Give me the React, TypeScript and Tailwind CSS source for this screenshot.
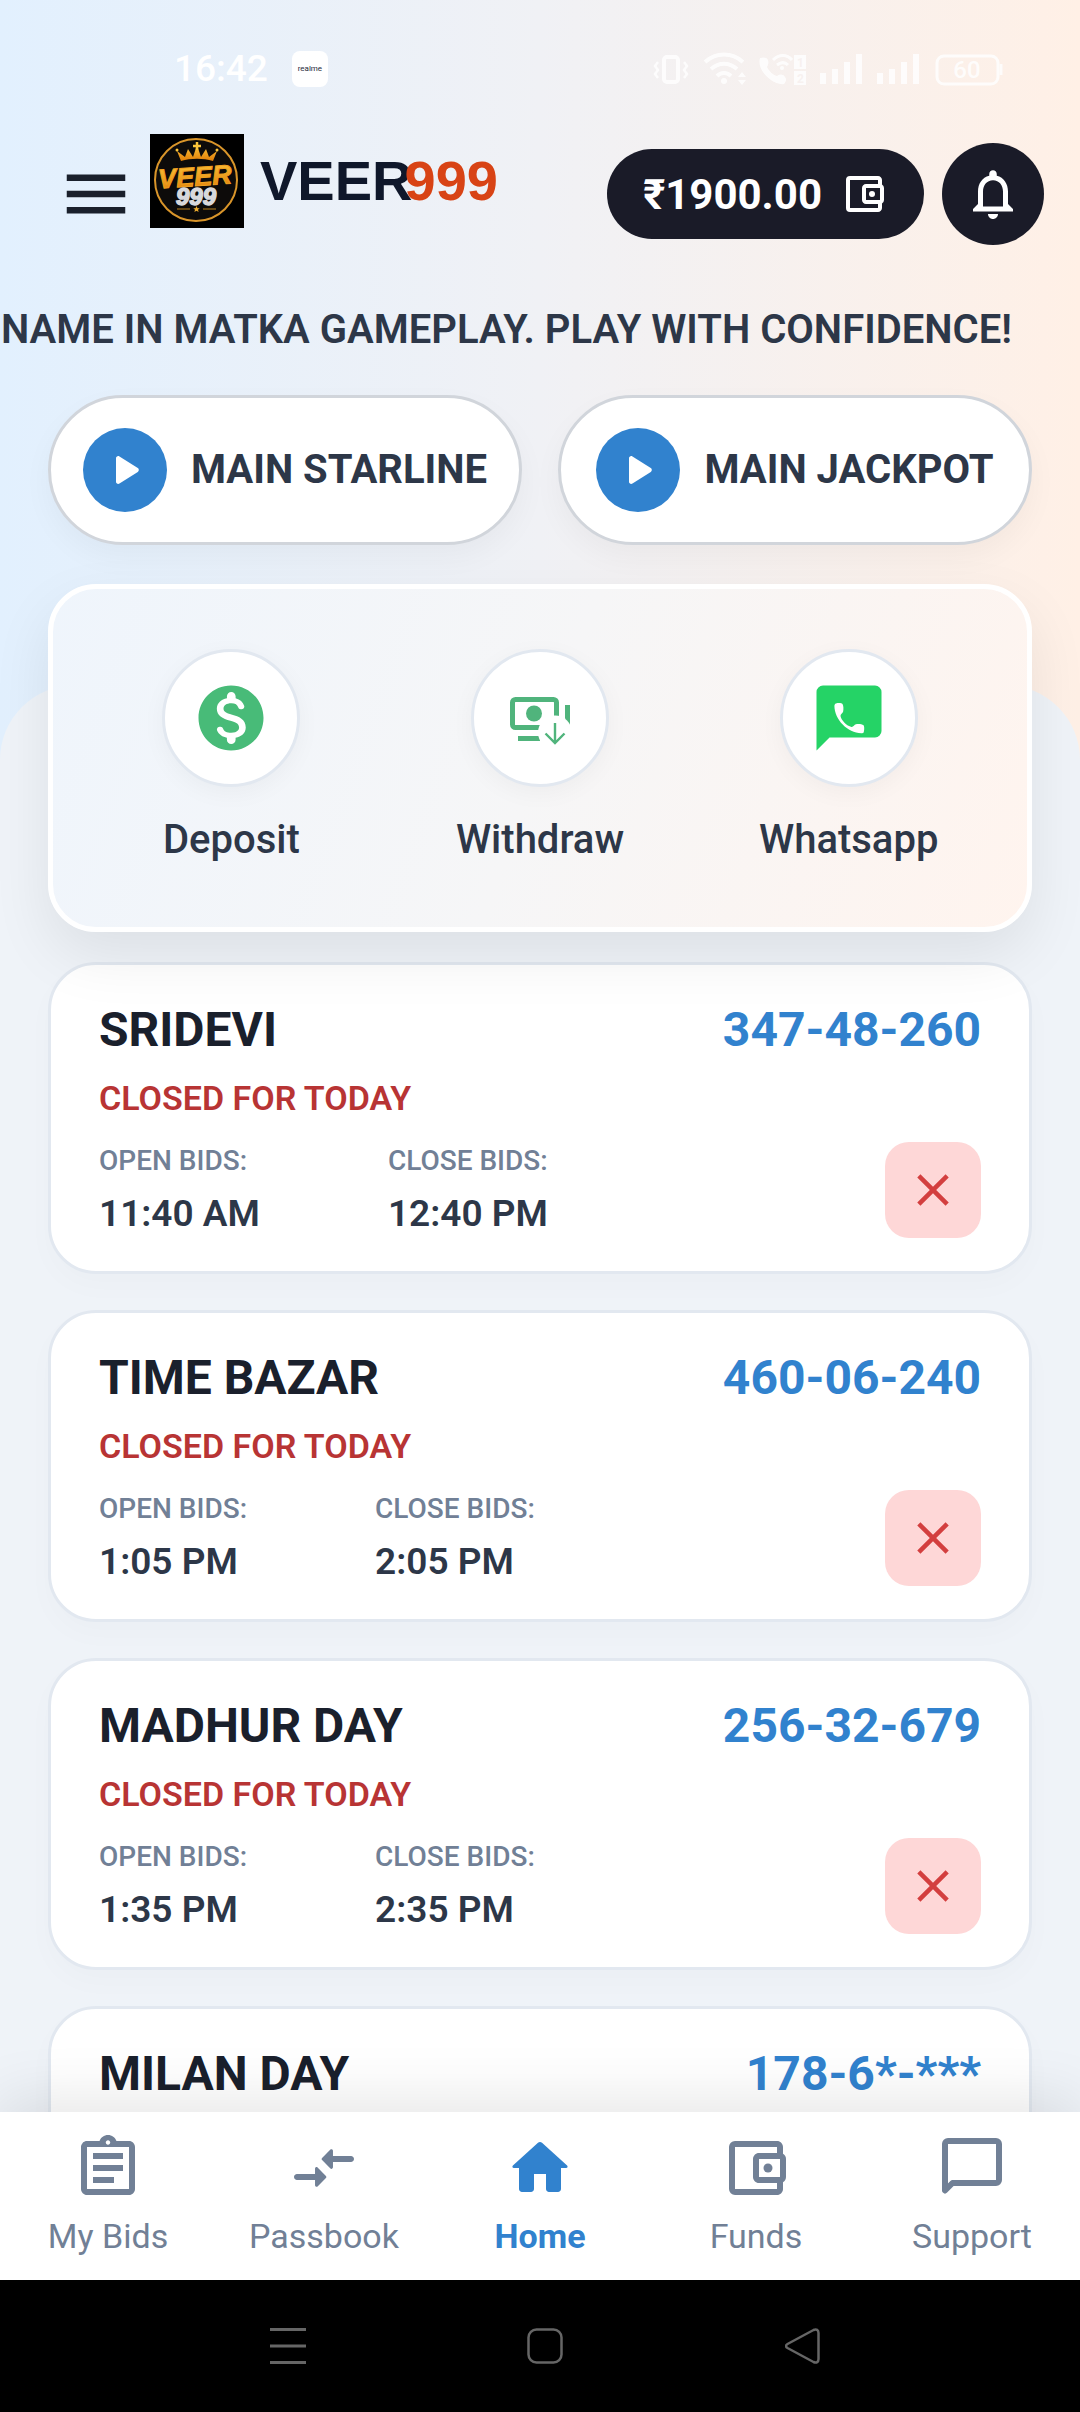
import React from 'react';
import {
  MdClose,
  MdMenu,
  MdOutlineAccountBalanceWallet,
  MdOutlineAssignment,
  MdNotificationsNone,
} from 'react-icons/md';

interface Market {
  name: string;
  result: string;
  status?: string;
  open?: string;
  close?: string;
}

const markets: Market[] = [
  { name: 'SRIDEVI', result: '347-48-260', status: 'CLOSED FOR TODAY', open: '11:40 AM', close: '12:40 PM' },
  { name: 'TIME BAZAR', result: '460-06-240', status: 'CLOSED FOR TODAY', open: '1:05 PM', close: '2:05 PM' },
  { name: 'MADHUR DAY', result: '256-32-679', status: 'CLOSED FOR TODAY', open: '1:35 PM', close: '2:35 PM' },
  { name: 'MILAN DAY', result: '178-6*-***' },
];

const PlayIcon = () => (
  <svg viewBox="0 0 24 24" className="size-[54px]" fill="currentColor">
    <path d="M8 6.82v10.36c0 .79.87 1.27 1.54.84l8.14-5.18c.62-.39.62-1.29 0-1.69L9.54 5.98C8.87 5.55 8 6.03 8 6.82z" />
  </svg>
);

const DollarIcon = () => (
  <svg viewBox="0 0 24 24" className="size-[78px] text-[#48bb78]" fill="currentColor">
    <path d="M12 2C6.48 2 2 6.48 2 12s4.48 10 10 10 10-4.48 10-10S17.52 2 12 2zm1.41 16.09v.58c0 .73-.6 1.33-1.33 1.33h-.01c-.73 0-1.33-.6-1.33-1.33v-.6c-1.33-.28-2.51-1.01-3.01-2.24-.23-.55.2-1.16.8-1.16h.24c.37 0 .67.25.81.6.29.75 1.05 1.27 2.51 1.27 1.96 0 2.4-.98 2.4-1.59 0-.83-.44-1.61-2.67-2.14-2.48-.6-4.18-1.62-4.18-3.67 0-1.72 1.39-2.84 3.11-3.21v-.6c0-.73.6-1.33 1.33-1.33h.01c.73 0 1.33.6 1.33 1.33v.62c1.38.34 2.25 1.2 2.63 2.26.2.55-.22 1.13-.81 1.13h-.26c-.37 0-.67-.26-.77-.62-.23-.76-.86-1.25-2.12-1.25-1.5 0-2.4.68-2.4 1.64 0 .84.65 1.39 2.67 1.91s4.18 1.39 4.18 3.91c-.02 1.83-1.39 2.83-3.13 3.16z" />
  </svg>
);

const WithdrawIcon = () => (
  <svg viewBox="0 0 78 78" className="size-[78px] text-[#50b47c]" fill="none" stroke="currentColor">
    <rect x="11.5" y="20.5" width="44" height="28" rx="3" strokeWidth="5" />
    <circle cx="33" cy="34.5" r="8" fill="currentColor" stroke="none" />
    <path d="M17 59.5h22M66.5 26v20" strokeWidth="5" />
    <circle cx="54" cy="53.5" r="17" fill="#fff" stroke="none" />
    <path d="M54 44v20M44.5 54.5l9.5 9.5 9.5-9.5" strokeWidth="2.4" />
  </svg>
);

const WhatsappIcon = () => (
  <svg viewBox="0 0 78 78" className="size-[78px]">
    <path d="M13 6.5h52a6.5 6.5 0 0 1 6.5 6.5v39a6.5 6.5 0 0 1-6.5 6.5H19.5l-13 13V13A6.5 6.5 0 0 1 13 6.5z" fill="#25d366" />
    <path
      d="M26 24.5c2-.6 5.5-.7 6.5.6 1 1.4 1.2 5.4.6 7.6-.4 1.6-2.8 2.6-2.6 4.2.8 4.4 6.2 9.8 11 11 1.8.3 2.8-2.2 4.4-2.7 2.2-.6 6-.3 7.4.8 1.2 1 1.1 5 .5 6.9-.3 1-1.2 1.3-2.4 1.3C37.6 54 24.6 40.6 24.4 27c0-1.2.5-2.2 1.6-2.5z"
      fill="#fff"
    />
  </svg>
);

const PassbookIcon = () => (
  <svg viewBox="0 0 24 24" className="size-[72px]" fill="currentColor">
    <path d="M9.01 14H3c-.55 0-1 .45-1 1s.45 1 1 1h6.01v1.79c0 .45.54.67.85.35l2.78-2.79c.19-.2.19-.51 0-.71l-2.78-2.79c-.31-.32-.85-.09-.85.35V14zm5.98-2.21V10H21c.55 0 1-.45 1-1s-.45-1-1-1h-6.01V6.21c0-.45-.54-.67-.85-.35l-2.78 2.79c-.19.2-.19.51 0 .71l2.78 2.79c.31.31.85.09.85-.36z" />
  </svg>
);

const HomeIcon = () => (
  <svg viewBox="0 0 24 24" className="size-[72px]" fill="currentColor">
    <path d="M10 19v-5h4v5c0 .55.45 1 1 1h3c.55 0 1-.45 1-1v-7h1.7c.46 0 .68-.57.33-.87L12.67 3.6c-.38-.34-.96-.34-1.34 0l-8.36 7.53c-.34.3-.13.87.33.87H5v7c0 .55.45 1 1 1h3c.55 0 1-.45 1-1z" />
  </svg>
);

const SupportIcon = () => (
  <svg viewBox="0 0 24 24" className="size-[72px]" fill="none" stroke="currentColor" strokeWidth="2" strokeLinejoin="round">
    <path d="M4 3h16a1 1 0 0 1 1 1v12a1 1 0 0 1-1 1H5.5L3 19.5V4a1 1 0 0 1 1-1z" />
  </svg>
);

const navItems = [
  { label: 'My Bids', icon: <MdOutlineAssignment className="size-[72px]" /> },
  { label: 'Passbook', icon: <PassbookIcon /> },
  { label: 'Home', icon: <HomeIcon />, active: true },
  { label: 'Funds', icon: <MdOutlineAccountBalanceWallet className="size-[72px]" /> },
  { label: 'Support', icon: <SupportIcon /> },
];

const StatusBar: React.FC = () => (
  <div className="flex items-center pt-[51px] pr-[75px] pl-[174px] text-white">
    <span className="text-[37px] leading-9 font-medium">16:42</span>
    <span className="ml-6 flex size-9 items-center justify-center rounded-lg bg-white text-[8px] leading-none text-gray-800">
      realme
    </span>
    <svg viewBox="0 0 352 36" className="ml-auto h-9 w-[352px] opacity-85" fill="none" stroke="currentColor">
      {/* vibrate */}
      <rect x="11" y="6" width="14" height="25" rx="3" strokeWidth="4" />
      <path d="M5 11l-3 4 3 4-3 4 3 4M31 11l3 4-3 4 3 4-3 4" strokeWidth="2.5" />
      {/* wifi */}
      <path d="M52 11c11-10 27-10 38 0M58 18c8-7 18-7 26 0M64 25c4-4 10-4 14 0" strokeWidth="4" />
      <circle cx="71" cy="30" r="3" fill="currentColor" stroke="none" />
      <path d="M85 26l4-5 4 5zM85 29l4 5 4-5z" fill="currentColor" stroke="none" />
      {/* wifi calling */}
      <path d="M107 7c3-1 7-1 8 2 1 3 0 5-1 7 2 4 6 8 10 9 3-2 6-2 8 1 2 2 1 5-1 7-11 2-28-14-24-26z" fill="currentColor" stroke="none" />
      <path d="M120 9c6-6 14-6 19 0M124 14c4-3 8-3 11 0" strokeWidth="3" />
      <circle cx="129" cy="17" r="2" fill="currentColor" stroke="none" />
      <path d="M141 4h12v14h-12zM141 20h12v14h-12z" fill="currentColor" stroke="none" />
      <text x="144" y="16" fontSize="12" fontWeight="700" fill="#f8f2f1" stroke="none">1</text>
      <text x="144" y="32" fontSize="12" fontWeight="700" fill="#f8f2f1" stroke="none">2</text>
      {/* signal bars */}
      <path d="M170 33V22M182 33V18M194 33V11M206 33V3M227 33V22M239 33V18M251 33V11M263 33V3" strokeWidth="6" />
      {/* battery */}
      <rect x="284" y="5" width="61" height="28" rx="7" strokeWidth="3" />
      <path d="M348 13v11" strokeWidth="3" />
      <text x="314" y="27" fontSize="24" fontWeight="500" textAnchor="middle" fill="currentColor" stroke="none">60</text>
    </svg>
  </div>
);

const BrandBadge: React.FC = () => (
  <svg viewBox="0 0 94 94" className="size-[94px]" role="img" aria-label="Veer 999">
    <defs>
      <linearGradient id="gold" x1="0" y1="0" x2="0" y2="1">
        <stop offset="0" stopColor="#fcc53a" />
        <stop offset="1" stopColor="#e07d08" />
      </linearGradient>
    </defs>
    <rect width="94" height="94" fill="#000" />
    <circle cx="46" cy="46" r="41" fill="#0d0b0a" stroke="#d9952a" strokeWidth="2" />
    <path d="M31 27l-4-10 8 6 3-8 5 8 4-12 4 12 5-8 3 8 8-6-4 10c-10-3-22-3-32 0z" fill="url(#gold)" />
    <path d="M47 8v8M43 12h8" stroke="#fcc53a" strokeWidth="2.5" />
    <circle cx="27" cy="16" r="1.5" fill="#fcc53a" />
    <circle cx="67" cy="16" r="1.5" fill="#fcc53a" />
    <g fontFamily="'Liberation Sans', Arial, sans-serif" fontWeight="700" fontStyle="italic" textAnchor="middle">
      <text x="45" y="52" fontSize="27" fill="url(#gold)" stroke="#f0a020" transform="rotate(-4 46 46)">VEER</text>
      <text x="46" y="71" fontSize="24" fill="#d8d8dc" stroke="#d8d8dc" strokeWidth="1.5">999</text>
    </g>
    <path d="M27 75h13M53 75h13" stroke="#b9801f" />
    <path d="M46.5 72l1 2.2h2.2L48 75.7l.6 2.3-2.1-1.3-2.1 1.3.6-2.3-1.7-1.5h2.2z" fill="#f0ae2e" />
  </svg>
);

const Header: React.FC = () => (
  <header className="mt-11 flex h-[126px] items-center pr-9 pl-[57px]">
    <button type="button" aria-label="Open menu" className="text-[#1a202c]">
      <MdMenu className="size-[78px]" />
    </button>
    <div className="ml-[15px] flex items-center gap-4 self-start pt-[3px]">
      <BrandBadge />
      <span className="font-['Liberation_Sans',Arial,sans-serif] text-[56px] leading-none font-bold text-[#0f172a]">
        VEER<span className="-ml-2 text-[#d84315]">999</span>
      </span>
    </div>
    <button type="button" className="ml-auto flex h-[90px] items-center gap-[18px] rounded-full bg-[#1a1b28] px-9 text-[42px] font-bold text-white">
      ₹1900.00
      <MdOutlineAccountBalanceWallet className="size-12" />
    </button>
    <button type="button" aria-label="Notifications" className="ml-[18px] flex size-[102px] items-center justify-center rounded-full bg-[#1a1b28] text-white">
      <MdNotificationsNone className="size-[60px]" />
    </button>
  </header>
);

const GameButton: React.FC<{ label: string }> = ({ label }) => (
  <button
    type="button"
    className="flex h-[150px] flex-1 items-center justify-center gap-6 rounded-full border-3 border-[#d1d5db] bg-white text-[40px] font-bold whitespace-nowrap text-[#2d3748] shadow-[0_12px_30px_rgba(0,0,0,0.04)]"
  >
    <span className="flex size-[84px] items-center justify-center rounded-full bg-[#3182ce] text-white">
      <PlayIcon />
    </span>
    {label}
  </button>
);

const QuickAction: React.FC<{ label: string; icon: React.ReactNode }> = ({ label, icon }) => (
  <button type="button" className="flex flex-1 flex-col items-center gap-[30px] text-[40px] leading-[46px] font-medium text-[#2d3748]">
    <span className="flex size-[138px] items-center justify-center rounded-full border-3 border-[#e2e8f0] bg-white shadow-[0_6px_24px_rgba(0,0,0,0.04)]">
      {icon}
    </span>
    {label}
  </button>
);

const BidTime: React.FC<{ label: string; time: string }> = ({ label, time }) => (
  <div>
    <p className="text-[28px] leading-8 font-medium text-[#718096]">{label}</p>
    <p className="mt-4 text-[37px] leading-[42px] font-semibold text-[#2d3748]">{time}</p>
  </div>
);

const MarketCard: React.FC<{ market: Market }> = ({ market }) => {
  const { name, result, status, open, close } = market;

  return (
    <article className="min-h-[312px] rounded-[48px] border-3 border-[#e2e8f0] bg-white px-12 py-[33px] shadow-[0_12px_30px_rgba(0,0,0,0.02)]">
      <div className="flex justify-between text-5xl leading-[64px] font-bold">
        <h2 className="text-[#1a202c]">{name}</h2>
        <span className="text-[#3182ce]">{result}</span>
      </div>
      {status && <p className="mt-4 text-[34px] leading-10 font-semibold text-[#b83434]">{status}</p>}
      {open && close && (
        <div className="mt-6 flex items-center gap-32">
          <BidTime label="OPEN BIDS:" time={open} />
          <BidTime label="CLOSE BIDS:" time={close} />
          <button type="button" aria-label={`${name} closed`} className="ml-auto flex size-24 items-center justify-center rounded-3xl bg-[#fed7d7] text-[#d33f3f]">
            <MdClose className="size-[54px]" />
          </button>
        </div>
      )}
    </article>
  );
};

const BottomNav: React.FC = () => (
  <nav className="relative z-20 grid grid-cols-5 bg-white pt-5 pb-6 shadow-[0_-12px_60px_rgba(0,0,0,0.1)]">
    {navItems.map(({ label, icon, active }) => (
      <a
        key={label}
        href="#"
        className={`flex flex-col items-center gap-3 text-[34px] leading-10 ${active ? 'font-bold text-[#3182ce]' : 'text-[#718096]'}`}
      >
        {icon}
        {label}
      </a>
    ))}
  </nav>
);

const SystemBar: React.FC = () => (
  <div className="flex h-[132px] items-center justify-between bg-black pr-[24%] pl-[25%] text-[#666]">
    <button type="button" aria-label="Recent apps">
      <svg viewBox="0 0 36 36" className="size-9" stroke="currentColor" strokeWidth="3">
        <path d="M0 1.5h36M0 18h36M0 34.5h36" />
      </svg>
    </button>
    <button type="button" aria-label="Home screen">
      <svg viewBox="0 0 36 36" className="size-9" fill="none" stroke="currentColor" strokeWidth="2.5">
        <rect x="1.5" y="1.5" width="33" height="33" rx="8" />
      </svg>
    </button>
    <button type="button" aria-label="Back">
      <svg viewBox="0 0 36 36" className="size-9" fill="none" stroke="currentColor" strokeWidth="2.5">
        <path d="M2.5 16l26-14c3-1.4 5 0 5 3v26c0 3-2 4.4-5 3l-26-14c-2-1.2-2-2.8 0-4z" />
      </svg>
    </button>
  </div>
);

const App: React.FC = () => {
  return (
    <div className="flex h-screen flex-col bg-linear-to-r from-[#e2f0fe] via-[#f0f1f5] to-[#fff0e6] font-[Roboto,sans-serif]">
      <main className="min-h-0 flex-1 overflow-hidden">
        <StatusBar />
        <Header />

        <div className="mt-[50px] flex justify-end overflow-hidden pr-[68px]">
          <p className="text-[40px] leading-[46px] font-semibold whitespace-nowrap text-[#2d3748]">
            NAME IN MATKA GAMEPLAY. PLAY WITH CONFIDENCE!
          </p>
        </div>

        <div className="mt-[42px] flex gap-9 px-12 pb-[140px]">
          <GameButton label="MAIN STARLINE" />
          <GameButton label="MAIN JACKPOT" />
        </div>

        <section className="flow-root rounded-t-[75px] bg-[#eff3f8] px-12 pb-9">
          {/* the action panel straddles the sheet's top edge */}
          <div className="relative z-10 -mt-[101px] flex h-[348px] rounded-[48px] border-5 border-white bg-linear-[110deg] from-[#eff5fc] via-[#f6f6f7] to-[#fff4ee] px-6 pt-15 shadow-[0_24px_60px_rgba(0,0,0,0.08)]">
            <QuickAction label="Deposit" icon={<DollarIcon />} />
            <QuickAction label="Withdraw" icon={<WithdrawIcon />} />
            <QuickAction label="Whatsapp" icon={<WhatsappIcon />} />
          </div>

          <div className="mt-[30px] flex flex-col gap-9">
            {markets.map((market) => (
              <MarketCard key={market.name} market={market} />
            ))}
          </div>
        </section>
      </main>

      <BottomNav />
      <SystemBar />
    </div>
  );
};

export default App;
